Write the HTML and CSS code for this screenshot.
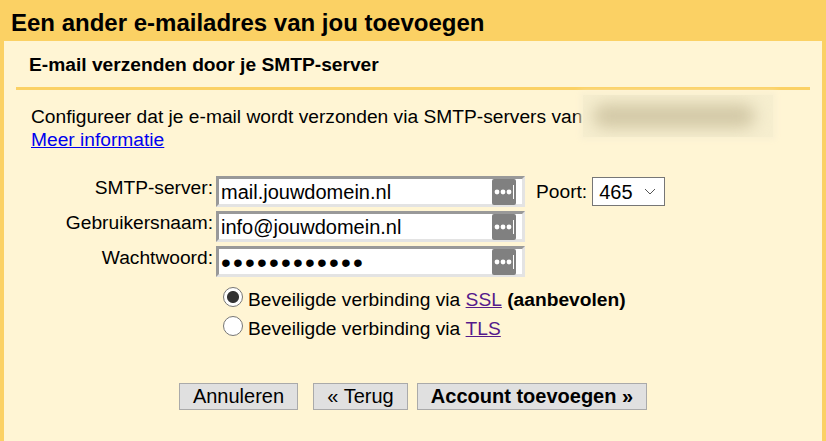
FILE: index.html
```html
<!DOCTYPE html>
<html lang="nl">
<head>
<meta charset="utf-8">
<title>Een ander e-mailadres van jou toevoegen</title>
<link rel="stylesheet" href="styles.css">
</head>
<body>
<h1 class="title">Een ander e-mailadres van jou toevoegen</h1>
<main class="panel">
  <h2 class="subtitle">E-mail verzenden door je SMTP-server</h2>
  <p class="intro">Configureer dat je e-mail wordt verzonden via SMTP-servers van<span class="smudge"></span><br><a class="more" href="#">Meer informatie</a></p>
  <form class="form">
    <label class="label" for="server">SMTP-server:</label>
    <div class="field"><input class="input" id="server" type="text" value="mail.jouwdomein.nl"><span class="key"><svg width="24" height="26" viewBox="0 0 24 26"><rect width="24" height="26" rx="2" fill="#808080"/><circle cx="5" cy="13" r="2.4" fill="#fff"/><circle cx="11" cy="13" r="2.4" fill="#fff"/><circle cx="17" cy="13" r="2.4" fill="#fff"/><rect x="21" y="6" width="1" height="14" fill="#fff"/></svg></span></div>
    <div class="port"><label class="port-label" for="port">Poort:</label><span class="select-wrap"><select class="select" id="port"><option>465</option><option>587</option></select><svg class="chevron" width="12" height="7" viewBox="0 0 12 7"><path d="M1 1l5 5 5-5" fill="none" stroke="#555" stroke-width="1"/></svg></span></div>
    <label class="label" for="user">Gebruikersnaam:</label>
    <div class="field"><input class="input" id="user" type="text" value="info@jouwdomein.nl"><span class="key"><svg width="24" height="26" viewBox="0 0 24 26"><rect width="24" height="26" rx="2" fill="#808080"/><circle cx="5" cy="13" r="2.4" fill="#fff"/><circle cx="11" cy="13" r="2.4" fill="#fff"/><circle cx="17" cy="13" r="2.4" fill="#fff"/><rect x="21" y="6" width="1" height="14" fill="#fff"/></svg></span></div>
    <span></span>
    <label class="label" for="pass">Wachtwoord:</label>
    <div class="field"><input class="input input-pass" id="pass" type="password" value="geheimwoord1"><span class="key"><svg width="24" height="26" viewBox="0 0 24 26"><rect width="24" height="26" rx="2" fill="#808080"/><circle cx="5" cy="13" r="2.4" fill="#fff"/><circle cx="11" cy="13" r="2.4" fill="#fff"/><circle cx="17" cy="13" r="2.4" fill="#fff"/><rect x="21" y="6" width="1" height="14" fill="#fff"/></svg></span></div>
    <span></span>
  </form>
  <div class="options">
    <label class="option"><input class="radio" type="radio" name="sec" checked>Beveiligde verbinding via&nbsp;<a class="visited" href="#">SSL</a>&nbsp;<b>(aanbevolen)</b></label>
    <label class="option"><input class="radio" type="radio" name="sec">Beveiligde verbinding via&nbsp;<a class="visited" href="#">TLS</a></label>
  </div>
  <div class="actions">
    <button class="btn btn-cancel" type="button">Annuleren</button>
    <button class="btn btn-back" type="button">« Terug</button>
    <button class="btn btn-next" type="button">Account toevoegen »</button>
  </div>
</main>
</body>
</html>
```
FILE: styles.css
```css
* { box-sizing: border-box; }
html, body { margin: 0; height: 100%; }
body {
  background: #fbd164;
  color: #000;
  font-family: "Liberation Sans", Arial, sans-serif;
  font-size: 19.2px;
  overflow: hidden;
  display: flex;
  flex-direction: column;
}
.title {
  margin: 0;
  height: 41px;
  padding: 9px 0 0 11px;
  font-size: 24px;
  line-height: 27px;
  font-weight: bold;
}
.panel {
  flex: 1;
  margin: 0 4px;
  padding: 0 12px;
  background: #fff5d4;
}
.subtitle {
  margin: 0;
  height: 49px;
  padding: 12px 0 0 13px;
  border-bottom: 3px solid #fbd164;
  font-size: 19.2px;
  line-height: 24px;
  font-weight: bold;
}
.intro {
  position: relative;
  margin: 15px 0 0;
  padding-left: 15px;
  line-height: 23px;
}
.more { color: #0000ee; }
.smudge {
  position: absolute;
  left: 567px;
  top: -10px;
  width: 190px;
  height: 42px;
  background: #f6eecf;
  box-shadow: 0 0 6px 3px #f9f0d2;
  overflow: hidden;
}
.smudge::after {
  content: "";
  position: absolute;
  left: 10px;
  top: 9px;
  width: 162px;
  height: 24px;
  background: #d2c8a6;
  border-radius: 12px;
  filter: blur(8px);
}
.form {
  display: grid;
  grid-template-columns: 200px 309px auto;
  grid-auto-rows: 31px;
  row-gap: 4px;
  margin-top: 25px;
}
.label {
  text-align: right;
  line-height: 24px;
  padding-right: 3px;
}
.field { position: relative; }
.input {
  display: block;
  width: 100%;
  height: 100%;
  margin: 0;
  padding: 2px 36px 0 2px;
  border-style: solid;
  border-width: 3px;
  border-color: #999 #e3e3e3 #e3e3e3 #999;
  background: #fff;
  color: #000;
  font: 20px "Liberation Sans", Arial, sans-serif;
  outline: none;
}
.input-pass {
  font-size: 28px;
  letter-spacing: 2.2px;
}
.key {
  position: absolute;
  right: 9px;
  top: 3px;
  display: flex;
}
.port {
  display: flex;
  align-items: flex-start;
  padding: 1px 0 0 11px;
  gap: 5px;
}
.port-label { line-height: 30px; }
.select-wrap {
  position: relative;
  display: flex;
}
.select {
  appearance: none;
  width: 73px;
  height: 29px;
  margin: 0;
  padding: 0 0 0 6px;
  border: 1px solid #767676;
  background: #fff;
  color: #000;
  font: 20px "Liberation Sans", Arial, sans-serif;
  border-radius: 0;
}
.chevron {
  position: absolute;
  right: 9px;
  top: 11px;
  pointer-events: none;
}
.options {
  display: flex;
  flex-direction: column;
  margin: 6px 0 0 207px;
}
.option {
  display: flex;
  align-items: center;
  height: 29px;
  line-height: 29px;
  padding-top: 3px;
}
.radio {
  appearance: none;
  width: 20px;
  height: 20px;
  margin: 0 5px 5px 0;
  border: 1px solid #767676;
  border-radius: 50%;
  background: #fff;
  flex: none;
}
.radio:checked {
  background: radial-gradient(circle, #333 0 5.5px, #fff 6.5px);
}
.visited { color: #551a8b; }
.actions {
  display: flex;
  margin: 42px 0 0 163px;
}
.btn {
  height: 27px;
  margin: 0;
  padding: 0;
  border: 1px solid #aaa;
  background: #e0e0e0;
  color: #000;
  font: 20px "Liberation Sans", Arial, sans-serif;
}
.btn-cancel { width: 119px; margin-right: 15px; }
.btn-back { width: 95px; margin-right: 9px; }
.btn-next { width: 230px; font-weight: bold; }
```
